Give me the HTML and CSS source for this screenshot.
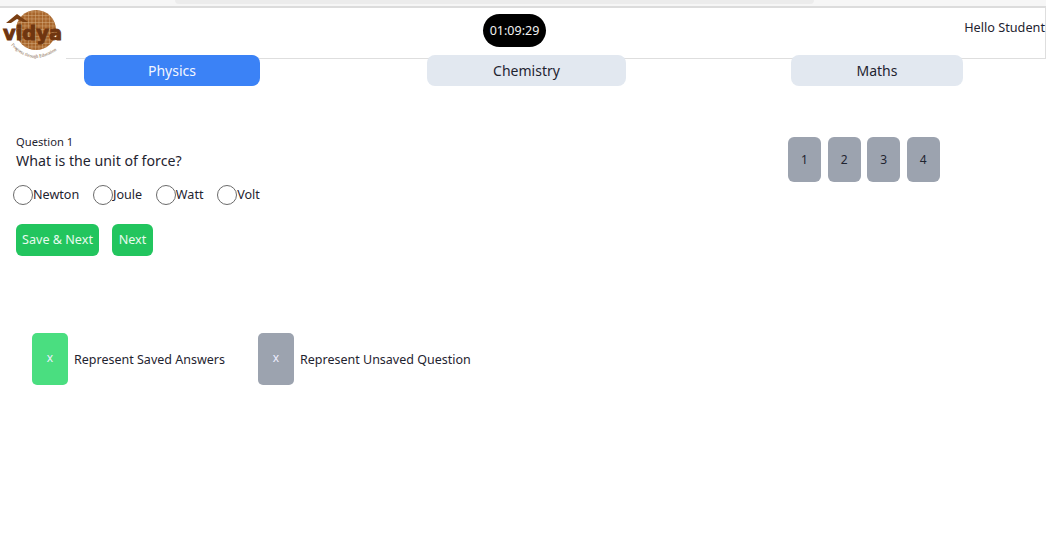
FILE: index.html
```html
<!DOCTYPE html>
<html lang="en">
<head>
<meta charset="utf-8">
<title>Vidya Test</title>
<link rel="stylesheet" href="styles.css">
</head>
<body>
<div class="topstrip"><div class="topstrip-inner"></div></div>
<header class="header">
  <svg class="logo" viewBox="0 0 66 52" width="66" height="52" aria-label="Vidya logo">
    <defs>
      <path id="arc" d="M11 37 Q34 62 62 38"/>
      <pattern id="mesh" width="3.5" height="3.5" patternUnits="userSpaceOnUse">
        <path d="M0 0H3.5M0 0V3.5" stroke="#dcb78c" stroke-width=".8"/>
      </pattern>
    </defs>
    <circle cx="36" cy="22" r="20" fill="#a8662c"/>
    <circle cx="36" cy="22" r="20" fill="url(#mesh)"/>
    <path d="M6 15 L17 6 L28 14 L23 14 L17 11 L11 15Z" fill="#7a3f12"/>
    <text class="logo-word" x="3" y="32" textLength="59" lengthAdjust="spacingAndGlyphs">vidya</text>
    <text class="logo-tag"><textPath href="#arc">Progress through Education</textPath></text>
  </svg>
  <div class="timer">01:09:29</div>
  <div class="greeting">Hello Student</div>
</header>
<nav class="tabs">
  <button class="tab tab-physics">Physics</button>
  <button class="tab tab-chemistry">Chemistry</button>
  <button class="tab tab-maths">Maths</button>
</nav>
<main class="main">
  <section class="question">
    <div class="q-num">Question 1</div>
    <div class="q-text">What is the unit of force?</div>
    <div class="options">
      <label class="option"><span class="radio"></span>Newton</label>
      <label class="option"><span class="radio"></span>Joule</label>
      <label class="option"><span class="radio"></span>Watt</label>
      <label class="option"><span class="radio"></span>Volt</label>
    </div>
    <div class="actions">
      <button class="btn btn-save">Save &amp; Next</button>
      <button class="btn btn-next">Next</button>
    </div>
  </section>
  <aside class="palette">
    <div class="tile">1</div>
    <div class="tile">2</div>
    <div class="tile">3</div>
    <div class="tile">4</div>
  </aside>
</main>
<section class="legend">
  <div class="swatch swatch-green">x</div>
  <div class="legend-text legend-first">Represent Saved Answers</div>
  <div class="swatch swatch-grey">x</div>
  <div class="legend-text">Represent Unsaved Question</div>
</section>
</body>
</html>
```
FILE: styles.css
```css
* { box-sizing: border-box; }
html, body { margin: 0; padding: 0; }
body {
  width: 1046px;
  height: 537px;
  overflow: hidden;
  background: #fff;
  color: #1f2430;
  font-family: "Noto Sans", "Open Sans", sans-serif;
}
.topstrip {
  height: 8px;
  background: #f6f6f6;
  border-bottom: 2px solid #dcdcdc;
  padding-left: 175px;
}
.topstrip-inner {
  width: 639px;
  height: 4px;
  background: #ececec;
  border-radius: 0 0 6px 6px;
}
.header {
  height: 51px;
  display: flex;
  align-items: flex-start;
  border-bottom: 1px solid #dedede;
  border-right: 1px solid #dedede;
}
.logo { flex: none; background: #fff; z-index: 1; }
.logo-word {
  font-family: "DejaVu Sans", sans-serif;
  font-weight: 700;
  font-size: 19px;
  fill: #6f3510;
  stroke: #6f3510;
  stroke-width: .9px;
}
.logo-tag {
  font-family: "Liberation Serif", serif;
  font-size: 4.6px;
  fill: #7a5a3c;
}
.timer {
  width: 63px;
  height: 33px;
  margin: 6px 0 0 417px;
  border-radius: 17px;
  background: #000;
  color: #f2f2f2;
  font-size: 12.5px;
  line-height: 33px;
  text-align: center;
}
.greeting {
  margin: 9px 0 0 auto;
  font-size: 12.7px;
  line-height: 20px;
  white-space: nowrap;
}
.tabs {
  display: flex;
  padding-left: 84px;
  margin-top: -4px;
  position: relative;
}
.tab {
  height: 31px;
  border: 0;
  border-radius: 8px;
  background: #e2e8f0;
  color: #1f2430;
  font: inherit;
  font-size: 14px;
  padding: 0;
}
.tab-physics { width: 176px; background: #3b82f6; color: #f2f6ff; }
.tab-chemistry { width: 199px; margin-left: 167px; }
.tab-maths { width: 172px; margin-left: 165px; }
.main { display: flex; padding: 48px 0 0 16px; }
.question { width: 772px; flex: none; }
.q-num { font-size: 11.2px; line-height: 16px; }
.q-text { font-size: 14.2px; line-height: 20px; margin-top: 1px; }
.options { display: flex; margin: 14px 0 0 -3px; }
.option {
  display: flex;
  align-items: center;
  font-size: 12.6px;
  line-height: 20px;
  margin-right: 13.7px;
}
.radio {
  width: 20px;
  height: 20px;
  border: 1.5px solid #6b6b6b;
  border-radius: 50%;
  background: #fff;
}
.actions { display: flex; gap: 13px; margin-top: 19px; }
.btn {
  height: 32px;
  border: 0;
  border-radius: 6px;
  background: #22c55e;
  color: #e8fbef;
  font: inherit;
  font-size: 12.6px;
  padding: 0 0 2px;
}
.btn-save { width: 83px; }
.btn-next { width: 41px; }
.palette { display: flex; gap: 6.6px; margin-top: 3px; align-self: flex-start; }
.tile {
  width: 33px;
  height: 45px;
  border-radius: 6px;
  background: #9ca3af;
  color: #1f2430;
  font-size: 12px;
  line-height: 45px;
  text-align: center;
}
.legend { display: flex; align-items: center; padding-left: 32px; margin-top: 77px; }
.swatch {
  width: 36px;
  height: 52px;
  border-radius: 5px;
  color: #eef;
  font-size: 12px;
  line-height: 50px;
  text-align: center;
}
.swatch-green { background: #4ade80; }
.swatch-grey { background: #9ca3af; }
.legend-text { margin-left: 6px; font-size: 12.5px; }
.legend-first { width: 184px; flex: none; }
```
